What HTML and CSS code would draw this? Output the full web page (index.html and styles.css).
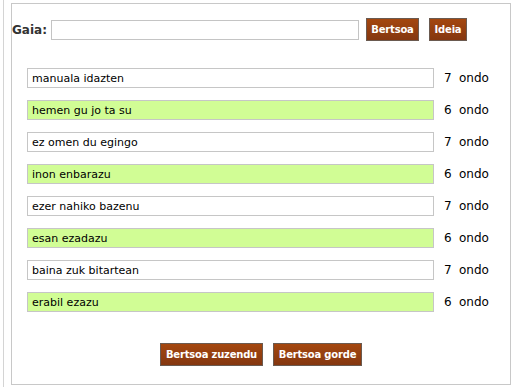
FILE: index.html
```html
<!DOCTYPE html>
<html>
<head>
<meta charset="utf-8">
<link rel="stylesheet" href="styles.css">
</head>
<body>
<div class="frame">
  <div class="panel">
    <div class="head">
      <label class="gaia">Gaia:</label>
      <input class="topic" type="text">
      <button class="btn btn-b">Bertsoa</button>
      <button class="btn btn-i">Ideia</button>
    </div>
    <div class="lines">
      <div class="row"><input class="line" value="manuala idazten"><span class="num">7</span><span class="ok">ondo</span></div>
      <div class="row"><input class="line good" value="hemen gu jo ta su"><span class="num">6</span><span class="ok">ondo</span></div>
      <div class="row"><input class="line" value="ez omen du egingo"><span class="num">7</span><span class="ok">ondo</span></div>
      <div class="row"><input class="line good" value="inon enbarazu"><span class="num">6</span><span class="ok">ondo</span></div>
      <div class="row"><input class="line" value="ezer nahiko bazenu"><span class="num">7</span><span class="ok">ondo</span></div>
      <div class="row"><input class="line good" value="esan ezadazu"><span class="num">6</span><span class="ok">ondo</span></div>
      <div class="row"><input class="line" value="baina zuk bitartean"><span class="num">7</span><span class="ok">ondo</span></div>
      <div class="row"><input class="line good" value="erabil ezazu"><span class="num">6</span><span class="ok">ondo</span></div>
    </div>
    <div class="foot">
      <button class="btn btn-z">Bertsoa zuzendu</button>
      <button class="btn btn-g">Bertsoa gorde</button>
    </div>
  </div>
</div>
</body>
</html>
```
FILE: styles.css
```css
html, body { margin: 0; padding: 0; background: #fff; }
body { font-family: "DejaVu Sans", Verdana, sans-serif; color: #000; }
.frame {
  margin-left: 3px;
  border-left: 1px solid #d4d4d4;
  height: 387px;
  box-sizing: border-box;
  padding-left: 7px;
  padding-top: 3px;
}
.panel {
  width: 500px;
  height: 382px;
  box-sizing: border-box;
  border: 1px solid #c8c8c8;
}
.head {
  display: flex;
  align-items: center;
  margin-top: 14px;
  height: 23px;
}
.gaia {
  font-weight: bold;
  font-size: 12px;
  color: #333;
  width: 39px;
}
.topic {
  width: 308px;
  height: 20px;
  box-sizing: border-box;
  border: 1px solid #c4c4c4;
  margin: 0;
  padding: 0 3px;
}
.btn {
  font-family: "DejaVu Sans", Verdana, sans-serif;
  font-weight: bold;
  font-size: 10px;
  letter-spacing: -0.2px;
  color: #fff;
  background: linear-gradient(#a4470f, #843710);
  border: 1px solid #6a5a50;
  height: 23px;
  padding: 0;
  margin: 0;
  box-sizing: border-box;
}
.btn-b { margin-left: 7px; width: 53px; }
.btn-i { margin-left: 10px; width: 38px; }
.lines {
  margin-top: 27px;
  padding-left: 15px;
  display: flex;
  flex-direction: column;
  gap: 12px;
}
.row {
  display: flex;
  align-items: center;
  height: 20px;
}
.line {
  width: 407px;
  height: 20px;
  box-sizing: border-box;
  border: 1px solid #c6c6c6;
  margin: 0;
  padding: 0 4px;
  font-family: "DejaVu Sans", Verdana, sans-serif;
  font-size: 11px;
  color: #000;
  background: #fff;
}
.line.good { background: #d1fd95; }
.num { font-size: 12px; margin-left: 10px; width: 15px; }
.ok { font-size: 12px; }
.foot {
  display: flex;
  justify-content: center;
  gap: 10px;
  margin-top: 31px;
}
.btn-z { width: 103px; }
.btn-g { width: 89px; }
```
